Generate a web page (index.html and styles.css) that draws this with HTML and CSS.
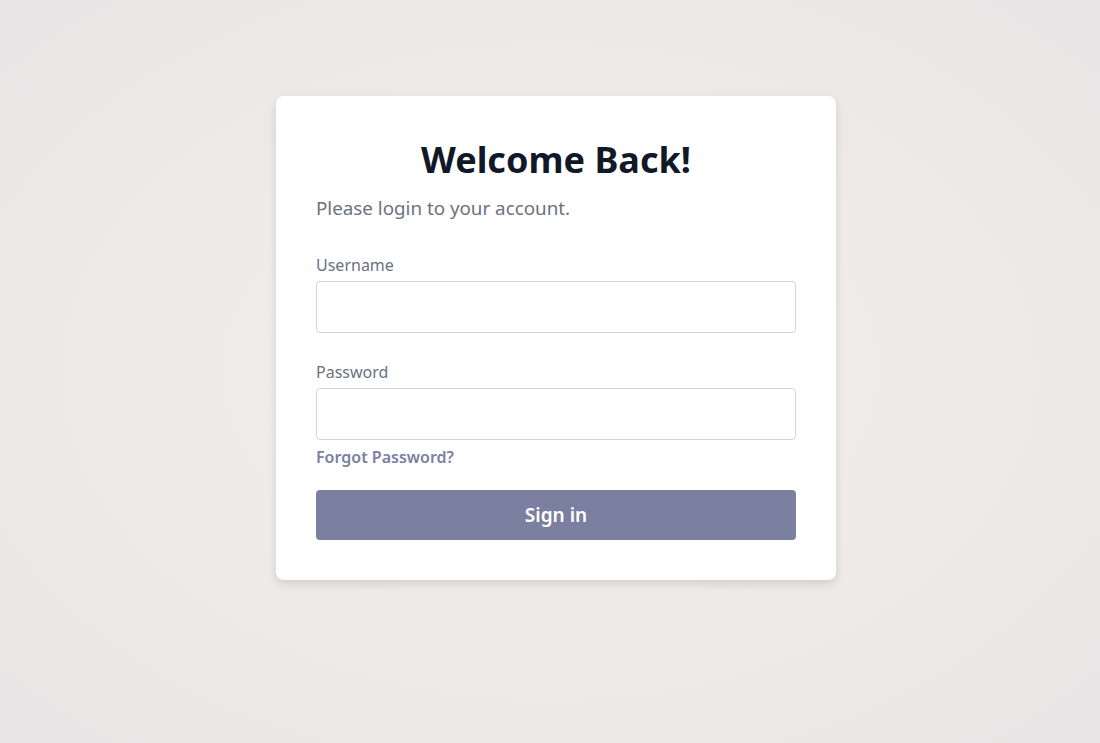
FILE: index.html
```html
<!DOCTYPE html>
<html lang="en">
<head>
<meta charset="utf-8">
<title>Login</title>
<link rel="stylesheet" href="styles.css">
</head>
<body>
<main class="page">
  <div class="card">
    <h1 class="title">Welcome Back!</h1>
    <p class="subtitle">Please login to your account.</p>
    <form class="form">
      <div class="field">
        <label class="label" for="username">Username</label>
        <input class="input" id="username" type="text">
      </div>
      <div class="field">
        <label class="label" for="password">Password</label>
        <input class="input" id="password" type="password">
        <a class="forgot" href="#">Forgot Password?</a>
      </div>
      <button class="btn" type="button">Sign in</button>
    </form>
  </div>
</main>
</body>
</html>
```

FILE: styles.css
```css
* { box-sizing: border-box; }
html, body { margin: 0; height: 100%; }
body {
  font-family: "Noto Sans", "Open Sans", sans-serif;
  background: radial-gradient(ellipse at 50% 50%, #f5f0f0 0%, #efebeb 45%, #e7e5e5 100%);
}
.page {
  min-height: 100%;
  display: flex;
  justify-content: center;
  align-items: flex-start;
  padding: 96px 0 0 12px;
}
.card {
  width: 560px;
  background: #ffffff;
  border-radius: 8px;
  padding: 40px;
  box-shadow: 0 4px 10px rgba(0, 0, 0, 0.12);
}
.title {
  margin: 4px 0 0;
  text-align: center;
  font-size: 36px;
  line-height: 40px;
  font-weight: 700;
  color: #111827;
}
.subtitle {
  margin: 14px 0 0;
  font-size: 18.8px;
  line-height: 28px;
  color: #6b7280;
}
.form { margin-top: 31px; display: flex; flex-direction: column; }
.field { display: flex; flex-direction: column; }
.field + .field { margin-top: 27px; }
.label {
  font-size: 16px;
  line-height: 24px;
  color: #6b7280;
  margin-bottom: 4px;
}
.input {
  height: 52px;
  width: 100%;
  border: 1px solid #d1d5db;
  border-radius: 4px;
  background: #fff;
  font: inherit;
}
.forgot {
  margin-top: 5px;
  font-size: 16px;
  line-height: 24px;
  font-weight: 600;
  color: #7b7fa0;
  text-decoration: none;
}
.btn {
  margin-top: 21px;
  height: 50px;
  border: none;
  border-radius: 4px;
  background: #7b7fa0;
  color: #ffffff;
  font-family: inherit;
  font-size: 19px;
  font-weight: 600;
}
```
